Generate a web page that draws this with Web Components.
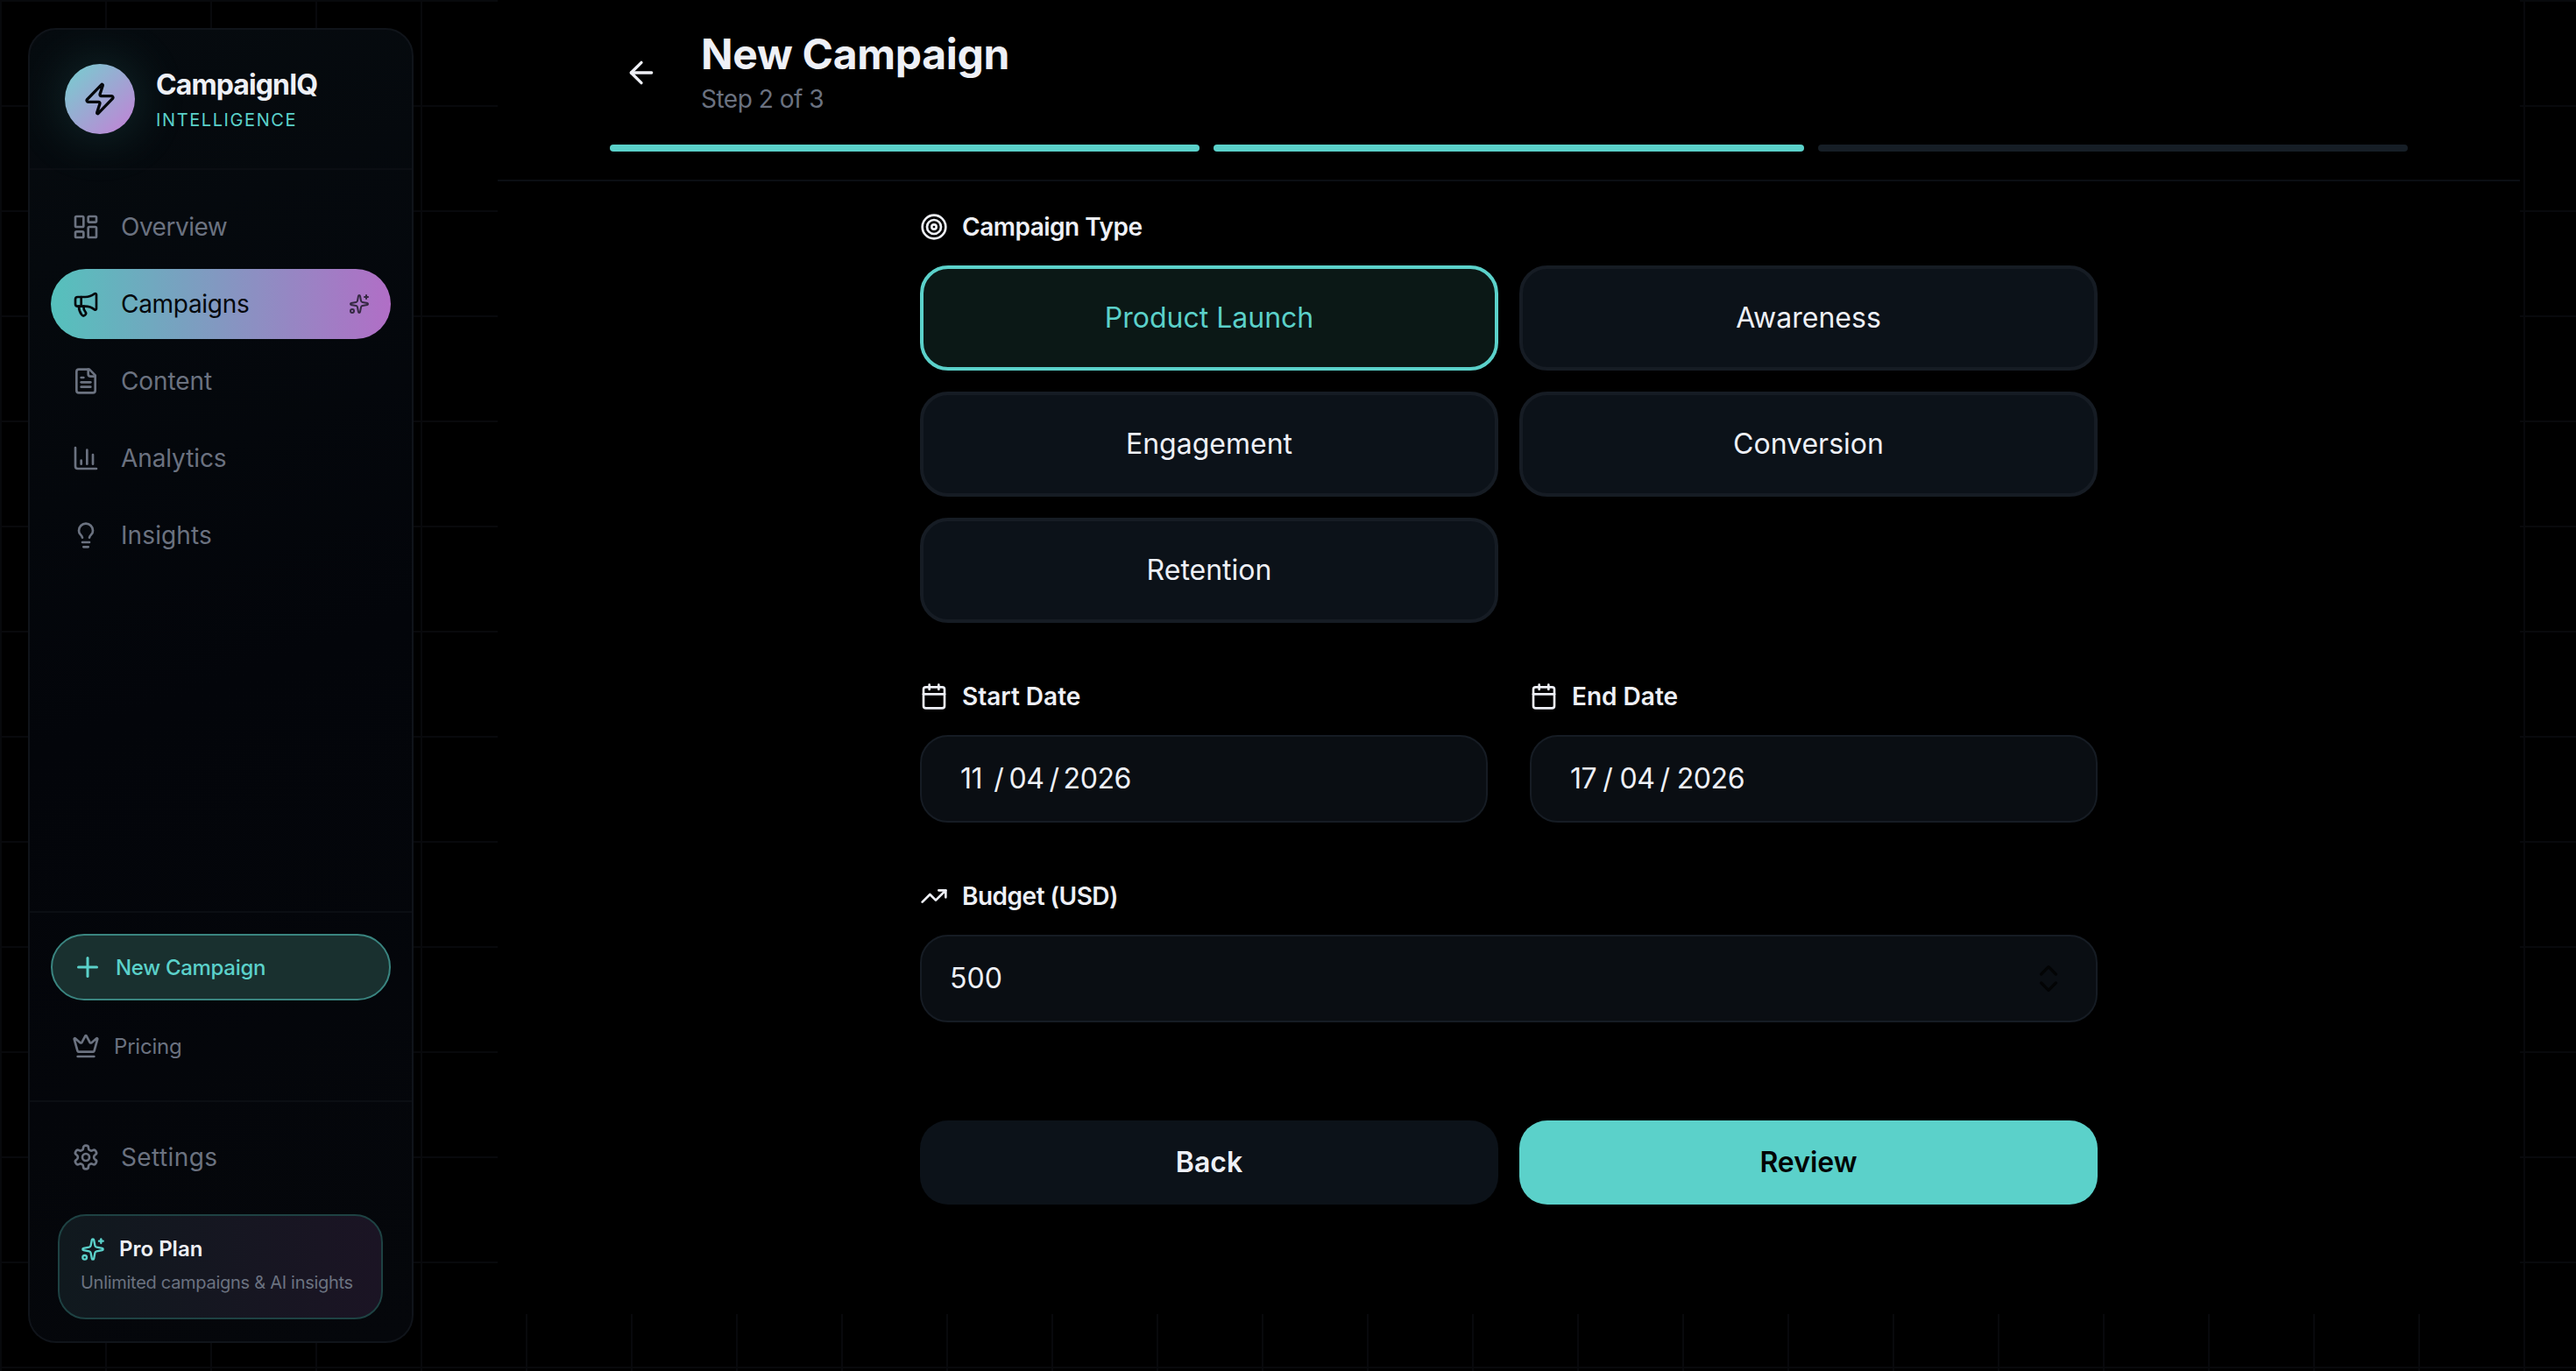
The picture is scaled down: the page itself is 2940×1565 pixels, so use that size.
<!DOCTYPE html>
<html lang="en">
<head>
<meta charset="utf-8">
<title>CampaignIQ - New Campaign</title>
<style>
  html, body { margin: 0; background: #000; }
  body {
    width: 2940px;
    height: 1565px;
    overflow: hidden;
    font-family: Inter, "Liberation Sans", sans-serif;
    color: #eef0f6;
    background-color: #000;
    background-image:
      linear-gradient(#08090c 2px, transparent 2px),
      linear-gradient(90deg, #08090c 2px, transparent 2px);
    background-size: 120px 120px;
  }
  app-shell { --teal: #5bd1ca; --muted: #6b7280; --ink: #eef0f6; }
</style>
</head>
<body>
<app-shell>
  <cq-sidebar slot="side"></cq-sidebar>
  <cq-main slot="main">
    <cq-header title="New Campaign" step="Step 2 of 3" current="2" total="3"></cq-header>
    <cq-form></cq-form>
  </cq-main>
</app-shell>

<script>
// lucide shapes, kept as plain svg markup
const ICONS = {
  zap: '<path d="M4 14a1 1 0 0 1-.78-1.63l9.9-10.2a.5.5 0 0 1 .86.46l-1.92 6.02A1 1 0 0 0 13 10h7a1 1 0 0 1 .78 1.63l-9.9 10.2a.5.5 0 0 1-.86-.46l1.92-6.02A1 1 0 0 0 11 14z"/>',
  dashboard: '<rect x="3" y="3" width="7" height="9" rx="1"/><rect x="14" y="3" width="7" height="5" rx="1"/><rect x="14" y="12" width="7" height="9" rx="1"/><rect x="3" y="16" width="7" height="5" rx="1"/>',
  megaphone: '<path d="M11 6a13 13 0 0 0 8.4-2.8A1 1 0 0 1 21 4v12a1 1 0 0 1-1.6.8A13 13 0 0 0 11 14H5a2 2 0 0 1-2-2V8a2 2 0 0 1 2-2z"/><path d="M6 14a12 12 0 0 0 2.4 7.2 2 2 0 0 0 3.2-2.4A8 8 0 0 1 10 14"/><path d="M8 6v8"/>',
  sparkles: '<path d="M11.017 2.814a1 1 0 0 1 1.966 0l1.051 5.558a2 2 0 0 0 1.594 1.594l5.558 1.051a1 1 0 0 1 0 1.966l-5.558 1.051a2 2 0 0 0-1.594 1.594l-1.051 5.558a1 1 0 0 1-1.966 0l-1.051-5.558a2 2 0 0 0-1.594-1.594l-5.558-1.051a1 1 0 0 1 0-1.966l5.558-1.051a2 2 0 0 0 1.594-1.594z"/><path d="M20 2v4"/><path d="M22 4h-4"/><circle cx="4" cy="20" r="2"/>',
  file: '<path d="M15 2H6a2 2 0 0 0-2 2v16a2 2 0 0 0 2 2h12a2 2 0 0 0 2-2V7Z"/><path d="M14 2v4a2 2 0 0 0 2 2h4"/><path d="M10 9H8"/><path d="M16 13H8"/><path d="M16 17H8"/>',
  chart: '<path d="M3 3v16a2 2 0 0 0 2 2h16"/><path d="M18 17V9"/><path d="M13 17V5"/><path d="M8 17v-3"/>',
  bulb: '<path d="M15 14c.2-1 .7-1.7 1.5-2.5 1-.9 1.5-2.2 1.5-3.5A6 6 0 0 0 6 8c0 1 .2 2.2 1.5 3.5.7.7 1.3 1.5 1.5 2.5"/><path d="M9 18h6"/><path d="M10 22h4"/>',
  plus: '<path d="M5 12h14"/><path d="M12 5v14"/>',
  crown: '<path d="M11.562 3.266a.5.5 0 0 1 .876 0L15.39 8.87a1 1 0 0 0 1.516.294L21.183 5.5a.5.5 0 0 1 .798.519l-2.834 10.246a1 1 0 0 1-.956.734H5.81a1 1 0 0 1-.957-.734L2.02 6.02a.5.5 0 0 1 .798-.519l4.276 3.664a1 1 0 0 0 1.516-.294z"/><path d="M5 21h14"/>',
  settings: '<path d="M12.22 2h-.44a2 2 0 0 0-2 2v.18a2 2 0 0 1-1 1.73l-.43.25a2 2 0 0 1-2 0l-.15-.08a2 2 0 0 0-2.73.73l-.22.38a2 2 0 0 0 .73 2.73l.15.1a2 2 0 0 1 1 1.72v.51a2 2 0 0 1-1 1.74l-.15.09a2 2 0 0 0-.73 2.73l.22.38a2 2 0 0 0 2.73.73l.15-.08a2 2 0 0 1 2 0l.43.25a2 2 0 0 1 1 1.73V20a2 2 0 0 0 2 2h.44a2 2 0 0 0 2-2v-.18a2 2 0 0 1 1-1.73l.43-.25a2 2 0 0 1 2 0l.15.08a2 2 0 0 0 2.73-.73l.22-.39a2 2 0 0 0-.73-2.73l-.15-.08a2 2 0 0 1-1-1.74v-.5a2 2 0 0 1 1-1.74l.15-.09a2 2 0 0 0 .73-2.73l-.22-.38a2 2 0 0 0-2.73-.73l-.15.08a2 2 0 0 1-2 0l-.43-.25a2 2 0 0 1-1-1.73V4a2 2 0 0 0-2-2z"/><circle cx="12" cy="12" r="3"/>',
  back: '<path d="m12 19-7-7 7-7"/><path d="M19 12H5"/>',
  target: '<circle cx="12" cy="12" r="10"/><circle cx="12" cy="12" r="6"/><circle cx="12" cy="12" r="2"/>',
  calendar: '<path d="M8 2v4"/><path d="M16 2v4"/><rect x="3" y="4" width="18" height="18" rx="2"/><path d="M3 10h18"/>',
  trend: '<path d="M16 7h6v6"/><path d="m22 7-8.5 8.5-5-5L2 17"/>',
  spinner: '<path d="m7 9 5-5 5 5"/><path d="m7 15 5 5 5-5"/>'
};

class CqIcon extends HTMLElement {
  connectedCallback() {
    const size = this.getAttribute("size") ?? 32;
    this.attachShadow({ mode: "open" }).innerHTML = `
      <style>
        :host { display: block; flex: none; width: ${size}px; height: ${size}px; }
        svg { display: block; width: 100%; height: 100%; fill: none; stroke: currentColor;
              stroke-width: 2; stroke-linecap: round; stroke-linejoin: round; }
      </style>
      <svg viewBox="0 0 24 24">${ICONS[this.getAttribute("name")]}</svg>`;
  }
}

// page frame: sidebar card on the left, main panel on the right
class AppShell extends HTMLElement {
  connectedCallback() {
    this.attachShadow({ mode: "open" }).innerHTML = `
      <style>
        :host { display: flex; align-items: flex-start; padding-right: 64px; }
      </style>
      <slot name="side"></slot>
      <slot name="main"></slot>`;
  }
}

class NavItem extends HTMLElement {
  connectedCallback() {
    const active = this.hasAttribute("active");
    this.attachShadow({ mode: "open" }).innerHTML = `
      <style>
        :host {
          display: flex; align-items: center; gap: 24px;
          height: 80px; padding: 0 24px; box-sizing: border-box;
          border-radius: 40px; font-size: 28px; letter-spacing: -.1px; color: var(--muted);
        }
        :host([active]) {
          color: #05080c;
          background: linear-gradient(90deg, #55c1bc, #b16ec6);
        }
        .trail { margin-left: auto; opacity: .7; }
      </style>
      <cq-icon name="${this.getAttribute("icon")}"></cq-icon>
      <span><slot></slot></span>
      ${active ? '<cq-icon class="trail" name="sparkles" size="24"></cq-icon>' : ""}`;
  }
}

class CqSidebar extends HTMLElement {
  connectedCallback() {
    this.attachShadow({ mode: "open" }).innerHTML = `
      <style>
        :host {
          display: flex; flex-direction: column; box-sizing: border-box;
          width: 440px; height: 1501px; margin: 32px 96px 32px 32px;
          background: linear-gradient(160deg, #060b0f, #03050a 50%, #05070b);
          border: 2px solid #10141a; border-radius: 32px; overflow: hidden;
        }
        .brand {
          display: flex; align-items: center; gap: 24px;
          padding: 39px 40px 39px; border-bottom: 2px solid #0b0e13;
        }
        .logo {
          width: 80px; height: 80px; border-radius: 50%; flex: none;
          display: grid; place-items: center; color: #05080c;
          background: linear-gradient(135deg, #74d0cf, #c57fd6);
          box-shadow: 0 0 64px rgba(91, 209, 202, .2);
        }
        .name { font-size: 32px; font-weight: 700; line-height: 40px; letter-spacing: -.9px; color: var(--ink); margin-top: 2px; }
        .tag {
          font-size: 20px; line-height: 28px; margin-top: 6px;
          letter-spacing: 1.6px; color: var(--teal);
        }
        nav { flex: 1; display: flex; flex-direction: column; gap: 8px; padding: 25px 24px 24px; }
        .actions { padding: 24px 24px 26px; border-top: 2px solid #0b0e13; border-bottom: 2px solid #0b0e13; }
        .new {
          display: flex; align-items: center; gap: 14px;
          height: 76px; padding: 0 22px; box-sizing: border-box;
          background: #19302f; border: 2px solid #3a8580; border-radius: 38px;
          color: var(--teal); font-size: 24px; font-weight: 500; letter-spacing: -.3px;
        }
        .pricing {
          display: flex; align-items: center; gap: 16px;
          height: 72px; margin-top: 16px; padding: 0 24px;
          color: var(--muted); font-size: 24px; letter-spacing: -.2px;
        }
        .foot { padding: 23px 24px 25px; }
        .plan {
          margin: 25px 9px 0 8px; padding: 22px 24px 20px; box-sizing: border-box; height: 120px;
          border: 2px solid #1e4243; border-radius: 32px;
          background: linear-gradient(90deg, #10191e, #1b1424);
        }
        .plan-row { display: flex; align-items: center; gap: 16px; color: var(--teal); }
        .plan-row b { font-size: 24px; font-weight: 600; color: var(--ink); line-height: 32px; }
        .plan p { margin: 8px 0 0; font-size: 20px; line-height: 28px; letter-spacing: -.28px; color: var(--muted); white-space: nowrap; }
      </style>
      <div class="brand">
        <div class="logo"><cq-icon name="zap" size="40"></cq-icon></div>
        <div>
          <div class="name">CampaignIQ</div>
          <div class="tag">INTELLIGENCE</div>
        </div>
      </div>
      <nav>
        <nav-item icon="dashboard" style="letter-spacing:-.5px">Overview</nav-item>
        <nav-item icon="megaphone" active style="letter-spacing:-.3px">Campaigns</nav-item>
        <nav-item icon="file">Content</nav-item>
        <nav-item icon="chart">Analytics</nav-item>
        <nav-item icon="bulb" style="letter-spacing:.1px">Insights</nav-item>
      </nav>
      <div class="actions">
        <div class="new"><cq-icon name="plus" size="36"></cq-icon><span>New Campaign</span></div>
        <div class="pricing"><cq-icon name="crown" size="32"></cq-icon><span>Pricing</span></div>
      </div>
      <div class="foot">
        <nav-item icon="settings" style="letter-spacing:.4px">Settings</nav-item>
        <div class="plan">
          <div class="plan-row"><cq-icon name="sparkles" size="28"></cq-icon><b>Pro Plan</b></div>
          <p>Unlimited campaigns &amp; AI insights</p>
        </div>
      </div>`;
  }
}

class CqMain extends HTMLElement {
  connectedCallback() {
    this.attachShadow({ mode: "open" }).innerHTML = `
      <style>
        :host { display: block; width: 2308px; height: 1500px; background: #000; }
      </style>
      <slot></slot>`;
  }
}

class CqHeader extends HTMLElement {
  connectedCallback() {
    const current = +this.getAttribute("current");
    const total = +this.getAttribute("total");
    let bars = "";
    for (let i = 1; i <= total; i++) bars += `<i class="${i <= current ? "on" : ""}"></i>`;
    this.attachShadow({ mode: "open" }).innerHTML = `
      <style>
        :host { display: block; padding: 32px 128px; border-bottom: 2px solid #0b0e13; }
        .top { display: flex; align-items: center; gap: 32px; }
        .back { width: 72px; height: 72px; display: grid; place-items: center; color: var(--ink); }
        h1 { margin: 0; font-size: 48px; line-height: 60px; font-weight: 700; letter-spacing: -.3px; color: var(--ink); }
        p { margin: 1px 0 0; font-size: 28px; line-height: 40px; letter-spacing: -.5px; color: var(--muted); }
        .bars { display: flex; gap: 16px; margin-top: 32px; }
        i { flex: 1; height: 8px; border-radius: 4px; background: #161e26; }
        i.on { background: var(--teal); }
      </style>
      <div class="top">
        <div class="back"><cq-icon name="back" size="40"></cq-icon></div>
        <div>
          <h1>${this.getAttribute("title")}</h1>
          <p>${this.getAttribute("step")}</p>
        </div>
      </div>
      <div class="bars">${bars}</div>`;
  }
}

class FieldLabel extends HTMLElement {
  connectedCallback() {
    this.attachShadow({ mode: "open" }).innerHTML = `
      <style>
        :host {
          display: flex; align-items: center; gap: 16px; height: 40px; margin-bottom: 24px;
          font-size: 28px; font-weight: 600; letter-spacing: -.5px; color: var(--ink);
        }
      </style>
      <cq-icon name="${this.getAttribute("icon")}"></cq-icon>
      <span><slot></slot></span>`;
  }
}

class TypeCard extends HTMLElement {
  connectedCallback() {
    this.attachShadow({ mode: "open" }).innerHTML = `
      <style>
        :host {
          display: grid; place-items: center; height: 120px; box-sizing: border-box;
          padding-bottom: 2px;
          background: #0c1219; border: 4px solid #161c24; border-radius: 32px;
          font-size: 32px; font-weight: 400; color: var(--ink);
        }
        :host([selected]) { background: #0b1816; border-color: var(--teal); color: var(--teal); }
      </style>
      <slot></slot>`;
  }
}

class FieldBox extends HTMLElement {
  connectedCallback() {
    this.attachShadow({ mode: "open" }).innerHTML = `
      <style>
        :host {
          display: flex; align-items: center; height: 100px; box-sizing: border-box;
          padding: 0 32px 1px; background: #0a0e13; border: 2px solid #161c24; border-radius: 32px;
          font-size: 32px; color: var(--ink);
        }
      </style>
      <slot></slot>`;
  }
}

class ActionButton extends HTMLElement {
  connectedCallback() {
    this.attachShadow({ mode: "open" }).innerHTML = `
      <style>
        :host {
          display: grid; place-items: center; height: 96px; box-sizing: border-box;
          padding-bottom: 2px; border-radius: 32px;
          background: #0c1219; color: var(--ink); font-size: 32px; font-weight: 600;
        }
        :host([primary]) { background: var(--teal); color: #020404; }
      </style>
      <slot></slot>`;
  }
}

class CqForm extends HTMLElement {
  connectedCallback() {
    this.attachShadow({ mode: "open" }).innerHTML = `
      <style>
        :host { display: block; width: 1344px; margin: 0 auto; padding-top: 32px; }
        .types { display: grid; grid-template-columns: 1fr 1fr; gap: 24px; }
        .dates { display: grid; grid-template-columns: 1fr 1fr; gap: 48px; margin-top: 64px; }
        .budget { margin-top: 64px; }
        .date { display: flex; padding-left: 12px; letter-spacing: -.4px; }
        .date .s1 { margin: 0 6px 0 13px; }
        .date .s2 { margin: 0 5px 0 6px; }
        .date.end .s1 { margin: 0 8px 0 7px; }
        .date.end .s2 { margin: 0 8px 0 6px; }
        .wide { letter-spacing: 0; }
        .spin { margin-left: auto; margin-right: 2px; color: #030405; }
        .buttons { display: grid; grid-template-columns: 1fr 1fr; gap: 24px; margin-top: 112px; }
      </style>
      <field-label icon="target">Campaign Type</field-label>
      <div class="types">
        <type-card selected>Product Launch</type-card>
        <type-card>Awareness</type-card>
        <type-card>Engagement</type-card>
        <type-card>Conversion</type-card>
        <type-card>Retention</type-card>
      </div>
      <div class="dates">
        <div>
          <field-label icon="calendar" class="wide">Start Date</field-label>
          <field-box><div class="date"><span>11</span><span class="s1">/</span><span>04</span><span class="s2">/</span><span>2026</span></div></field-box>
        </div>
        <div>
          <field-label icon="calendar" class="wide">End Date</field-label>
          <field-box><div class="date end"><span>17</span><span class="s1">/</span><span>04</span><span class="s2">/</span><span>2026</span></div></field-box>
        </div>
      </div>
      <div class="budget">
        <field-label icon="trend">Budget (USD)</field-label>
        <field-box><span>500</span><cq-icon class="spin" name="spinner" size="40"></cq-icon></field-box>
      </div>
      <div class="buttons">
        <action-button>Back</action-button>
        <action-button primary>Review</action-button>
      </div>`;
  }
}

customElements.define("cq-icon", CqIcon);
customElements.define("app-shell", AppShell);
customElements.define("nav-item", NavItem);
customElements.define("cq-sidebar", CqSidebar);
customElements.define("cq-main", CqMain);
customElements.define("cq-header", CqHeader);
customElements.define("field-label", FieldLabel);
customElements.define("type-card", TypeCard);
customElements.define("field-box", FieldBox);
customElements.define("action-button", ActionButton);
customElements.define("cq-form", CqForm);
</script>
</body>
</html>
